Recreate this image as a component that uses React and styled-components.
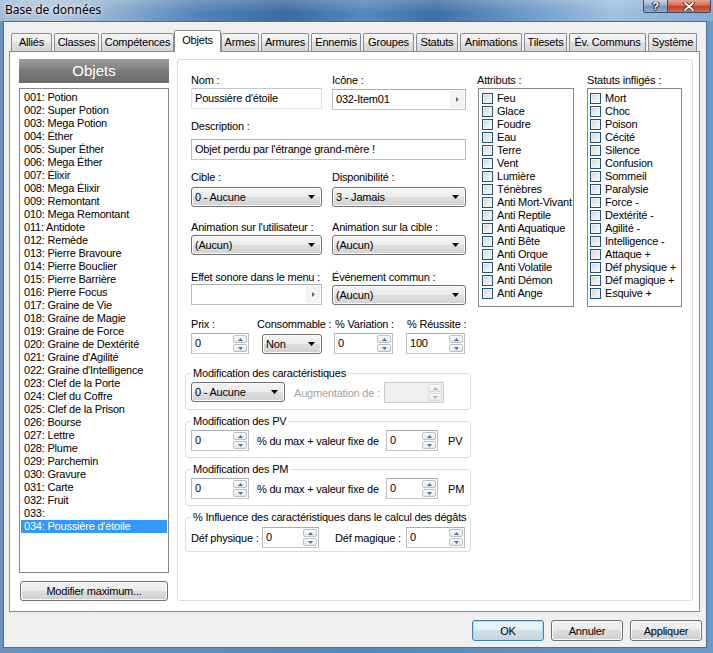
import React from 'react';
import styled, { createGlobalStyle, css } from 'styled-components';

const GlobalStyle = createGlobalStyle`
  html, body { margin: 0; padding: 0; background: #fff; }
  body {
    font-family: "Liberation Sans", Arial, sans-serif;
    font-size: 11px;
    color: #000;
    letter-spacing: -0.2px;
  }
  #root { width: 713px; height: 653px; }
`;

const Window = styled.div`
  width: 713px;
  height: 653px;
  display: flex;
  flex-direction: column;
  overflow: hidden;
  background: #5f8cbc;
`;

const TitleBar = styled.div`
  height: 21px;
  flex: none;
  display: flex;
  align-items: flex-start;
  justify-content: space-between;
  background:
    linear-gradient(rgba(255,255,255,0.18), rgba(255,255,255,0) 60%),
    linear-gradient(90deg, #a3bcd6 0%, #b1c7dd 8%, #8eafd0 16%, #5283b6 28%, #3b6b9f 40%, #5688bb 51%, #3e6fa4 61%, #6b98c5 73%, #a2c0de 86%, #86abd0 100%);
`;

const Title = styled.div`
  font-family: "Noto Sans", "Liberation Sans", sans-serif;
  font-size: 12px;
  letter-spacing: 0;
  line-height: 20px;
  padding-left: 5px;
  color: #000;
  text-shadow: 0 0 6px rgba(255,255,255,0.9), 0 0 3px rgba(255,255,255,0.7);
`;

const CaptionButtons = styled.div`
  display: flex;
  margin-right: 2px;
`;

const CaptionButton = styled.div`
  width: ${p => p.$w}px;
  height: 13px;
  box-sizing: border-box;
  border: 1px solid #33506f;
  border-top: none;
  display: flex;
  align-items: center;
  justify-content: center;
  color: #fff;
  font-weight: bold;
  font-size: 11px;
  letter-spacing: 0;
  text-shadow: 0 0 1px #223, 1px 0 1px #223, -1px 0 1px #223, 0 1px 1px #223;
  ${p => p.$close ? css`
    border-radius: 0 0 3px 0;
    border-left: none;
    background: linear-gradient(#e8a493, #d46a50 45%, #c23f22 55%, #d56e50);
  ` : css`
    border-radius: 0 0 0 3px;
    background: linear-gradient(#c3d3e4, #97b0cb 45%, #7895b7 55%, #91afcd);
  `}
`;

const Frame = styled.div`
  flex: 1;
  min-height: 0;
  display: flex;
  padding: 0 6px 5px 3px;
  background: linear-gradient(90deg, #6c93bf, #5886b8 50%, #6d99c6);
`;

const Client = styled.div`
  flex: 1;
  display: flex;
  flex-direction: column;
  background: #f0f0f0;
  border: 1px solid #4d6d92;
  padding: 8px 4px 6px 5px;
`;

const TabStrip = styled.div`
  display: flex;
  align-items: flex-end;
  gap: 2px;
  height: 21px;
  padding-left: 2px;
  flex: none;
`;

const Tab = styled.div`
  box-sizing: border-box;
  width: ${p => p.$w}px;
  height: 18px;
  border: 1px solid #898c95;
  border-bottom: none;
  border-radius: 2px 2px 0 0;
  background: linear-gradient(#f5f5f5, #ececec 50%, #e0e0e0 50%, #d6d6d6);
  text-align: center;
  line-height: 17px;
  white-space: nowrap;
  ${p => p.$active && css`
    width: ${p.$w + 4}px;
    height: 22px;
    margin: 0 -2px -1px;
    background: #fff;
    position: relative;
    z-index: 1;
    line-height: 18px;
  `}
`;

const TabPanel = styled.div`
  flex: 1;
  display: flex;
  gap: 8px;
  margin-right: 2px;
  border: 1px solid #898c95;
  background: #fff;
  padding: 7px 6px 10px 9px;
`;

const LeftCol = styled.div`
  width: 150px;
  flex: none;
  display: flex;
  flex-direction: column;
`;

const ListHeader = styled.div`
  height: 24px;
  line-height: 24px;
  text-align: center;
  color: #fff;
  font-size: 15px;
  letter-spacing: 0;
  background: linear-gradient(#a0a0a0, #7a7a7a 50%, #6c6c6c);
`;

const ItemList = styled.div`
  flex: 1;
  margin-top: 5px;
  border: 1px solid #828790;
  padding: 2px 1px;
  background: #fff;
  overflow: hidden;
`;

const ListItem = styled.div`
  height: 13px;
  line-height: 13px;
  padding-left: 3px;
  white-space: nowrap;
  ${p => p.$sel && css`
    background: #3399ff;
    color: #fff;
  `}
`;

const Button = styled.div`
  width: ${p => p.$w}px;
  height: ${p => p.$h}px;
  box-sizing: border-box;
  border: 1px solid ${p => (p.$default ? '#3c7fb1' : '#707070')};
  border-radius: 3px;
  background: ${p => p.$default
    ? 'linear-gradient(#eef5fa 0%, #e4eef5 49%, #d3dfe8 50%, #c6d5e0 100%)'
    : 'linear-gradient(#f2f2f2 0%, #ebebeb 49%, #dddddd 50%, #cfcfcf 100%)'};
  box-shadow: inset 0 0 0 1px ${p => (p.$default ? '#a9dcf5' : '#fcfcfc')};
  display: flex;
  align-items: center;
  justify-content: center;
  white-space: nowrap;
  margin: ${p => p.$m || '0'};
`;

const ButtonRow = styled.div`
  display: flex;
  justify-content: flex-end;
  gap: 7px;
  margin-top: 8px;
  flex: none;
`;

const RightPanel = styled.div`
  flex: 1;
  display: flex;
  align-items: flex-start;
  border: 1px solid #d6dde3;
  border-radius: 3px;
  padding: 14px 0 0 7px;
`;

const FormCol = styled.div`
  width: 286px;
  flex: none;
  display: flex;
  flex-direction: column;
`;

const Row = styled.div`
  display: grid;
  grid-template-columns: ${p => p.$cols};
  column-gap: ${p => p.$gap || 0}px;
  margin-top: ${p => p.$mt || 0}px;
  padding: 0 5px 0 6px;
`;

const Field = styled.div`
  display: flex;
  flex-direction: column;
  align-items: flex-start;
`;

const Label = styled.div`
  height: 13px;
  line-height: 13px;
  white-space: nowrap;
  margin-bottom: ${p => p.$gap || 0}px;
  padding-left: ${p => p.$pl || 0}px;
`;

const TextBox = styled.div`
  align-self: stretch;
  height: 21px;
  box-sizing: border-box;
  border: 1px solid;
  border-color: ${p => (p.$light ? '#c4c7cd #dde0e5 #e3e6ea #dde0e5' : '#abadb3 #b7bac0 #bfc3c8 #b7bac0')};
  background: #fff;
  padding-left: 3px;
  line-height: 19px;
  white-space: nowrap;
  display: flex;
  margin-top: ${p => p.$mt || 0}px;
`;

const BoxText = styled.span`
  flex: 1;
`;

const PickButton = styled.div`
  width: 14px;
  margin: 1px;
  background: #f3f3f3;
  display: flex;
  align-items: center;
  justify-content: center;
`;

const SelectBox = styled.div`
  align-self: ${p => (p.$w ? 'flex-start' : 'stretch')};
  width: ${p => (p.$w ? `${p.$w}px` : 'auto')};
  height: 20px;
  box-sizing: border-box;
  display: flex;
  align-items: center;
  justify-content: space-between;
  padding: 0 6px 0 3px;
  margin-left: ${p => p.$ml || 0}px;
  margin-top: ${p => p.$mt || 0}px;
  border: 1px solid #707070;
  border-radius: 3px;
  background: linear-gradient(#f4f4f4 0%, #ececec 49%, #dedede 50%, #d2d2d2 100%);
  box-shadow: inset 0 0 0 1px #fbfbfb;
  white-space: nowrap;
`;

const SpinField = styled.div`
  width: ${p => p.$w}px;
  height: 21px;
  box-sizing: border-box;
  display: flex;
  border: 1px solid ${p => (p.$disabled ? '#c9cbce' : '#abadb3')};
  border-color: ${p => (p.$disabled ? '#c9cbce' : '#abadb3 #b9bcc1 #c2c5ca #b9bcc1')};
  background: ${p => (p.$disabled ? '#f0f0f0' : '#fff')};
`;

const SpinText = styled.div`
  flex: 1;
  padding-left: 3px;
  line-height: 19px;
`;

const SpinButtons = styled.div`
  width: 15px;
  display: flex;
  flex-direction: column;
  gap: 1px;
  padding: 1px 1px 1px 0;
  box-sizing: border-box;
`;

const SpinBtn = styled.div`
  flex: 1;
  display: flex;
  align-items: center;
  justify-content: center;
  border: 1px solid ${p => (p.$disabled ? '#dadada' : '#bcc0c6')};
  border-radius: 2px;
  background: linear-gradient(#fcfcfc, #e9e9e9);
`;

const Group = styled.fieldset`
  margin: ${p => p.$mt}px 0 0;
  padding: ${p => p.$pt}px 5px ${p => p.$pb}px;
  border: 1px solid #d5dfe5;
  border-radius: 3px;
  min-width: 0;
`;

const Legend = styled.legend`
  padding: 0 2px;
  line-height: 13px;
  white-space: nowrap;
`;

const GroupRow = styled.div`
  display: grid;
  grid-template-columns: ${p => p.$cols};
  align-items: center;
`;

const InlineText = styled.div`
  padding-left: ${p => p.$pl || 0}px;
  white-space: nowrap;
  color: ${p => (p.$disabled ? '#a3a3a3' : '#000')};
`;

const CheckCol = styled.div`
  width: ${p => p.$w}px;
  flex: none;
  margin-left: ${p => p.$ml}px;
  display: flex;
  flex-direction: column;
`;

const CheckList = styled.div`
  margin-top: 1px;
  margin-left: ${p => p.$ml || 0}px;
  height: 219px;
  box-sizing: border-box;
  border: 1px solid #828790;
  background: #fff;
  padding: 3px 0 0 ${p => p.$pl}px;
  overflow: hidden;
`;

const CheckItem = styled.div`
  display: flex;
  align-items: center;
  gap: 4px;
  height: 13px;
  line-height: 13px;
  white-space: nowrap;
`;

const Check = styled.span`
  width: 11px;
  height: 11px;
  flex: none;
  box-sizing: border-box;
  border: 1px solid #23527f;
  background: linear-gradient(135deg, #cdd0d4, #eeeeee 60%, #fafafa);
  box-shadow: inset 0 0 0 1px #f2f2f2;
`;

const DownArrow = () => (
  <svg width="7" height="4" viewBox="0 0 7 4"><path d="M0 0H7L3.5 4Z" fill="#000" /></svg>
);

const RightArrow = () => (
  <svg width="3" height="5" viewBox="0 0 3 5"><path d="M0 0L3 2.5L0 5Z" fill="#6a6a6a" /></svg>
);

const SpinTri = ({ up, disabled }) => (
  <svg width="5" height="3" viewBox="0 0 5 3">
    <path d={up ? 'M0 3H5L2.5 0Z' : 'M0 0H5L2.5 3Z'} fill={disabled ? '#b4b4b4' : '#4a6f9c'} />
  </svg>
);

const CloseGlyph = () => (
  <svg width="12" height="9" viewBox="0 0 12 9">
    <path d="M2 1L10 8M10 1L2 8" stroke="#3a2a2a" strokeWidth="3.4" strokeLinecap="round" />
    <path d="M2 1L10 8M10 1L2 8" stroke="#fff" strokeWidth="1.8" strokeLinecap="round" />
  </svg>
);

const Spin = ({ w, value, disabled }) => (
  <SpinField $w={w} $disabled={disabled}>
    <SpinText>{value}</SpinText>
    <SpinButtons>
      <SpinBtn $disabled={disabled}><SpinTri up disabled={disabled} /></SpinBtn>
      <SpinBtn $disabled={disabled}><SpinTri disabled={disabled} /></SpinBtn>
    </SpinButtons>
  </SpinField>
);

const Select = ({ children, w, ml, mt }) => (
  <SelectBox $w={w} $ml={ml} $mt={mt}>
    <span>{children}</span>
    <DownArrow />
  </SelectBox>
);

const Picker = ({ value, mt }) => (
  <TextBox $mt={mt}>
    <BoxText>{value}</BoxText>
    <PickButton><RightArrow /></PickButton>
  </TextBox>
);

const tabs = [
  ['Alliés', 41], ['Classes', 45], ['Compétences', 73], ['Objets', 43], ['Armes', 38],
  ['Armures', 48], ['Ennemis', 50], ['Groupes', 51], ['Statuts', 42], ['Animations', 62],
  ['Tilesets', 43], ['Év. Communs', 77], ['Système', 49],
];

const items = [
  'Potion', 'Super Potion', 'Mega Potion', 'Éther', 'Super Éther', 'Mega Éther', 'Élixir',
  'Mega Élixir', 'Remontant', 'Mega Remontant', 'Antidote', 'Remède', 'Pierre Bravoure',
  'Pierre Bouclier', 'Pierre Barrière', 'Pierre Focus', 'Graine de Vie', 'Graine de Magie',
  'Graine de Force', 'Graine de Dextérité', "Graine d'Agilité", "Graine d'Intelligence",
  'Clef de la Porte', 'Clef du Coffre', 'Clef de la Prison', 'Bourse', 'Lettre', 'Plume',
  'Parchemin', 'Gravure', 'Carte', 'Fruit', '', "Poussière d'étoile",
];

const attributs = [
  'Feu', 'Glace', 'Foudre', 'Eau', 'Terre', 'Vent', 'Lumière', 'Ténèbres', 'Anti Mort-Vivant',
  'Anti Reptile', 'Anti Aquatique', 'Anti Bête', 'Anti Orque', 'Anti Volatile', 'Anti Démon', 'Anti Ange',
];

const statuts = [
  'Mort', 'Choc', 'Poison', 'Cécité', 'Silence', 'Confusion', 'Sommeil', 'Paralysie', 'Force -',
  'Dextérité -', 'Agilité -', 'Intelligence -', 'Attaque +', 'Déf physique +', 'Déf magique +', 'Esquive +',
];

export default function App() {
  return (
    <>
      <GlobalStyle />
      <Window>
        <TitleBar>
          <Title>Base de données</Title>
          <CaptionButtons>
            <CaptionButton $w={25}>?</CaptionButton>
            <CaptionButton $w={43} $close><CloseGlyph /></CaptionButton>
          </CaptionButtons>
        </TitleBar>
        <Frame>
          <Client>
            <TabStrip>
              {tabs.map(([t, w]) => (
                <Tab key={t} $w={w} $active={t === 'Objets'}>{t}</Tab>
              ))}
            </TabStrip>
            <TabPanel>
              <LeftCol>
                <ListHeader>Objets</ListHeader>
                <ItemList>
                  {items.map((name, i) => {
                    const n = String(i + 1).padStart(3, '0');
                    return (
                      <ListItem key={n} $sel={i === 33}>{`${n}: ${name}`}</ListItem>
                    );
                  })}
                </ItemList>
                <Button $w={148} $h={20} $m="8px 1px 0">Modifier maximum...</Button>
              </LeftCol>

              <RightPanel>
                <FormCol>
                  <Row $cols="131px 134px" $gap={10}>
                    <Field>
                      <Label $gap={1}>Nom :</Label>
                      <TextBox $light><BoxText>Poussière d'étoile</BoxText></TextBox>
                    </Field>
                    <Field>
                      <Label $gap={1}>Icône :</Label>
                      <Picker value="032-Item01" mt={1} />
                    </Field>
                  </Row>
                  <Row $cols="1fr" $mt={10}>
                    <Field>
                      <Label $gap={6}>Description :</Label>
                      <TextBox><BoxText>Objet perdu par l'étrange grand-mère !</BoxText></TextBox>
                    </Field>
                  </Row>
                  <Row $cols="131px 134px" $gap={10} $mt={11}>
                    <Field>
                      <Label $gap={3}>Cible :</Label>
                      <Select>0 - Aucune</Select>
                    </Field>
                    <Field>
                      <Label $gap={3}>Disponibilité :</Label>
                      <Select>3 - Jamais</Select>
                    </Field>
                  </Row>
                  <Row $cols="131px 134px" $gap={10} $mt={14}>
                    <Field>
                      <Label $gap={1}>Animation sur l'utilisateur :</Label>
                      <Select>(Aucun)</Select>
                    </Field>
                    <Field>
                      <Label $gap={1}>Animation sur la cible :</Label>
                      <Select>(Aucun)</Select>
                    </Field>
                  </Row>
                  <Row $cols="131px 134px" $gap={10} $mt={16}>
                    <Field>
                      <Label>Effet sonore dans le menu :</Label>
                      <Picker value="" />
                    </Field>
                    <Field>
                      <Label>Événement commun :</Label>
                      <Select mt={1}>(Aucun)</Select>
                    </Field>
                  </Row>
                  <Row $cols="66px 77px 72px 60px" $mt={13}>
                    <Field>
                      <Label $gap={2}>Prix :</Label>
                      <Spin w={58} value="0" />
                    </Field>
                    <Field>
                      <Label $gap={2}>Consommable :</Label>
                      <Select w={60} ml={5} mt={1}>Non</Select>
                    </Field>
                    <Field>
                      <Label $gap={2} $pl={1}>% Variation :</Label>
                      <Spin w={59} value="0" />
                    </Field>
                    <Field>
                      <Label $gap={2} $pl={1}>% Réussite :</Label>
                      <Spin w={59} value="100" />
                    </Field>
                  </Row>

                  <Group $mt={13} $pt={2} $pb={6}>
                    <Legend>Modification des caractéristiques</Legend>
                    <GroupRow $cols="94px 99px 60px">
                      <Select>0 - Aucune</Select>
                      <InlineText $pl={9} $disabled>Augmentation de :</InlineText>
                      <Spin w={60} value="" disabled />
                    </GroupRow>
                  </Group>

                  <Group $mt={5} $pt={2} $pb={6}>
                    <Legend>Modification des PV</Legend>
                    <GroupRow $cols="58px 137px 52px auto">
                      <Spin w={58} value="0" />
                      <InlineText $pl={8}>% du max + valeur fixe de</InlineText>
                      <Spin w={52} value="0" />
                      <InlineText $pl={10}>PV</InlineText>
                    </GroupRow>
                  </Group>

                  <Group $mt={5} $pt={2} $pb={6}>
                    <Legend>Modification des PM</Legend>
                    <GroupRow $cols="58px 137px 52px auto">
                      <Spin w={58} value="0" />
                      <InlineText $pl={8}>% du max + valeur fixe de</InlineText>
                      <Spin w={52} value="0" />
                      <InlineText $pl={10}>PM</InlineText>
                    </GroupRow>
                  </Group>

                  <Group $mt={5} $pt={3} $pb={3}>
                    <Legend>% Influence des caractéristiques dans le calcul des dégâts</Legend>
                    <GroupRow $cols="71px 57px 87px 59px">
                      <InlineText>Déf physique :</InlineText>
                      <Spin w={57} value="0" />
                      <InlineText $pl={16}>Déf magique :</InlineText>
                      <Spin w={59} value="0" />
                    </GroupRow>
                  </Group>
                </FormCol>

                <CheckCol $w={97} $ml={6}>
                  <Label>Attributs :</Label>
                  <CheckList $ml={1} $pl={3}>
                    {attributs.map(a => (
                      <CheckItem key={a}><Check />{a}</CheckItem>
                    ))}
                  </CheckList>
                </CheckCol>

                <CheckCol $w={95} $ml={13}>
                  <Label>Statuts infligés :</Label>
                  <CheckList $pl={2}>
                    {statuts.map(s => (
                      <CheckItem key={s}><Check />{s}</CheckItem>
                    ))}
                  </CheckList>
                </CheckCol>
              </RightPanel>
            </TabPanel>
            <ButtonRow>
              <Button $w={72} $h={21} $default>OK</Button>
              <Button $w={72} $h={21}>Annuler</Button>
              <Button $w={72} $h={21}>Appliquer</Button>
            </ButtonRow>
          </Client>
        </Frame>
      </Window>
    </>
  );
}
